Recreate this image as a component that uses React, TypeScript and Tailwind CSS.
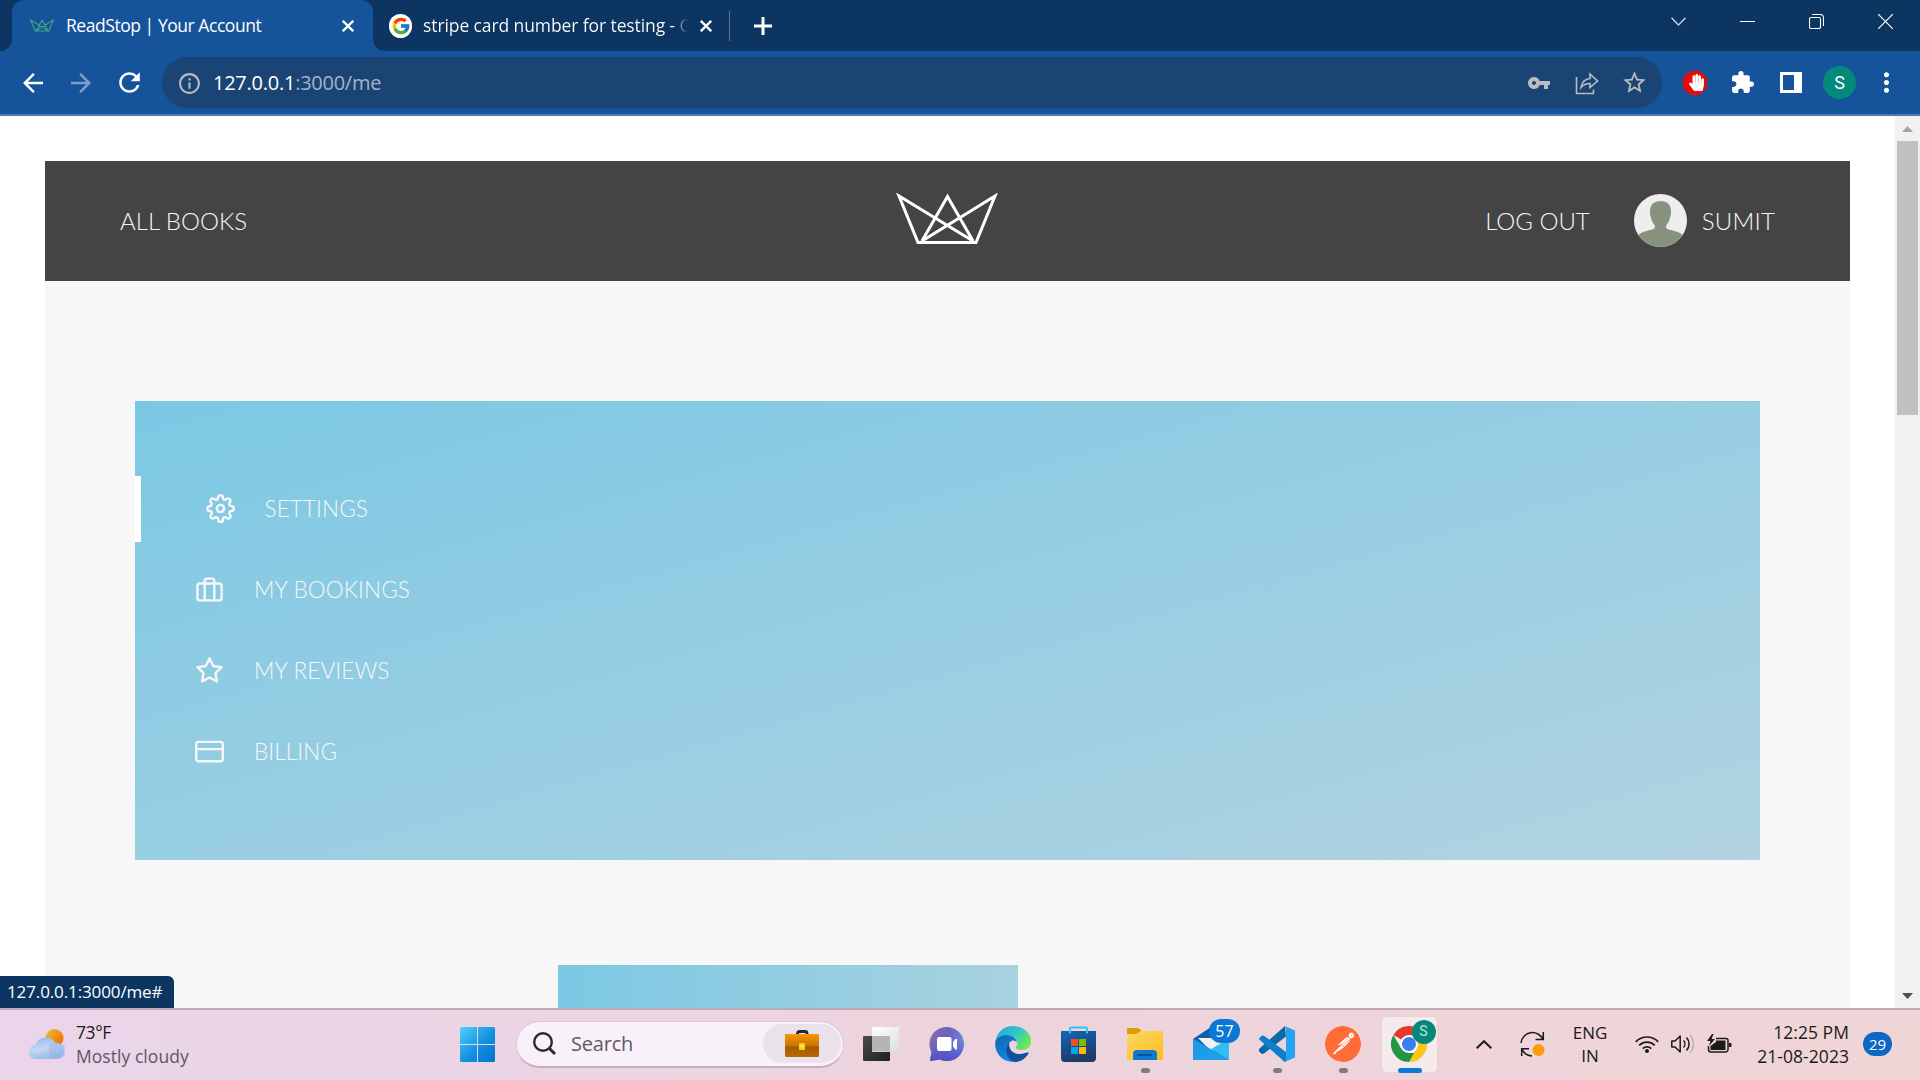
import React from "react";
import {
  MdArrowBack,
  MdArrowForward,
  MdRefresh,
  MdVpnKey,
  MdStarBorder,
  MdExtension,
  MdMoreVert,
  MdInfoOutline,
} from "react-icons/md";
import { FcGoogle } from "react-icons/fc";
import { SiPostman } from "react-icons/si";
import { FaHandPaper } from "react-icons/fa";

function Crown({ className, stroke, width }: { className: string; stroke: string; width: number }) {
  return (
    <svg className={className} viewBox="0 0 102 52" fill="none" stroke={stroke} strokeWidth={width}>
      <path d="M22 49.500H80L99 3L26 48L51.500 3.500L77 48L3 3Z" strokeLinejoin="miter" />
    </svg>
  );
}

function CloseX() {
  return (
    <svg className="size-3 shrink-0" viewBox="0 0 12 12" stroke="#fff" strokeWidth="2.300">
      <path d="M.8 .8L11.200 11.200M11.200 .8L.8 11.200" />
    </svg>
  );
}

function TabStrip() {
  return (
    <div className="flex h-[51px] bg-[#0c3561]">
      <div className="flex w-3 items-end bg-[#15539a]">
        <div className="h-full w-full rounded-br-[12px] bg-[#0c3561]" />
      </div>
      <div className="bg-[#0c3561]">
        <div className="flex h-[51px] w-[361px] items-center rounded-t-[12px] bg-[#15539a] pl-[18px] pr-[19px]">
          <Crown className="h-[13px] w-6" stroke="#3fa584" width={5} />
          <span className="ml-3 grow whitespace-nowrap text-[17.500px] tracking-[-0.45px] text-white">ReadStop | Your Account</span>
          <CloseX />
        </div>
      </div>
      <div className="bg-[#15539a]">
        <div className="flex h-[51px] w-[357px] items-center rounded-bl-[12px] bg-[#0c3561] pl-4">
          <span className="flex size-6 items-center justify-center rounded-full bg-white">
            <FcGoogle size={20} />
          </span>
          <span className="ml-[11px] w-[265px] whitespace-nowrap bg-gradient-to-r from-white from-94% to-transparent bg-clip-text text-[17.500px] tracking-[-0.1px] text-transparent">
            stripe card number for testing - G
          </span>
          <span className="ml-3">
            <CloseX />
          </span>
          <span className="ml-[17px] h-[30px] w-px bg-[#5c7795]" />
        </div>
      </div>
      <div className="flex grow items-center bg-[#0c3561] pl-[24px]">
        <svg className="size-[18px]" viewBox="0 0 18 18" stroke="#fff" strokeWidth="3">
          <path d="M9 0V18M0 9H18" />
        </svg>
      </div>
      <div className="flex h-[43px] items-center gap-[54px] pr-[27px]">
        <svg className="h-[9px] w-[15px]" viewBox="0 0 15 9" fill="none" stroke="#c9d3de" strokeWidth="1.400">
          <path d="M.5 .8L7.500 8L14.500 .8" />
        </svg>
        <svg className="h-[15px] w-[15px]" viewBox="0 0 15 15" stroke="#fff" strokeWidth="1">
          <path d="M0 7.500H15" />
        </svg>
        <svg className="size-[15px]" viewBox="0 0 15 15" fill="none" stroke="#fff" strokeWidth="1.100">
          <rect x=".5" y="3.500" width="11" height="11" rx="1.600" />
          <path d="M3.200 .5H11.500A3 3 0 0 1 14.500 3.500V12" />
        </svg>
        <svg className="size-[15px]" viewBox="0 0 15 15" stroke="#fff" strokeWidth="1.200">
          <path d="M0 0L15 15M15 0L0 15" />
        </svg>
      </div>
    </div>
  );
}

function Toolbar() {
  return (
    <div className="flex h-[65px] items-center border-b-2 border-[#4a7ab4] bg-[#15539a] pl-[18px] text-white">
      <MdArrowBack size={30} />
      <MdArrowForward size={30} className="ml-[18px] text-[#7e9fc8]" />
      <MdRefresh size={31} className="ml-[18px]" />
      <div className="ml-[17px] flex h-[51px] w-[1500px] items-center rounded-full bg-[#1a4474] pl-[14px] text-[#b9bdc2]">
        <MdInfoOutline size={25} className="relative left-px top-px" />
        <span className="ml-3 grow text-[20px] tracking-[-0.25px] text-[#a3b4c7]">
          <span className="text-white">127.0.0.1</span>:3000/me
        </span>
        <MdVpnKey size={24} />
        <svg className="ml-[24px] size-6" viewBox="0 0 24 24" fill="none" stroke="currentColor" strokeWidth="1.600">
          <path d="M1.500 6V22.500H18.500V18.500" />
          <path d="M6 16.500C7 10.500 10 8 15 7.500V3L22.500 10L15 16.500V12.500C11 12.500 8.500 13.500 6 16.500Z" />
        </svg>
        <MdStarBorder size={27} className="ml-[22px] mr-[14px]" />
      </div>
      <svg className="ml-[21px] size-6" viewBox="0 0 24 24">
        <path d="M7 0H17L24 7V17L17 24H7L0 17V7Z" fill="#e60b0b" />
        <foreignObject x="4.500" y="3" width="16" height="18">
          <FaHandPaper size={17} color="#fff" />
        </foreignObject>
      </svg>
      <MdExtension size={25} className="ml-[23px]" />
      <span className="ml-[25px] h-[21px] w-[22px] border-y-[3px] border-l-[3px] border-r-8 border-white" />
      <span className="ml-[21px] flex size-[33px] items-center justify-center rounded-full bg-[#05897a] font-['Roboto'] text-[18px]">
        S
      </span>
      <MdMoreVert size={31} className="ml-[15px]" />
    </div>
  );
}

function Avatar() {
  return (
    <svg className="h-[53px] w-[53px]" viewBox="0 0 53 53">
      <defs>
        <clipPath id="disc">
          <circle cx="26.500" cy="26.500" r="26.500" />
        </clipPath>
      </defs>
      <g clipPath="url(#disc)">
        <rect width="53" height="53" fill="#eeeeee" />
        <path
          d="M26.500 7C33 7 37 10.500 37 17C37 24 34.500 28.500 32.500 31C31.500 33.500 32 34.500 34.500 35.500C41 37 46 38 49 41.500V53H4V41.500C7 38 12 37 18.500 35.500C21 34.500 21.500 33.500 20.500 31C18.500 28.500 16 24 16 17C16 10.500 20 7 26.500 7Z"
          fill="#87927f"
        />
      </g>
    </svg>
  );
}

function MenuIcon({ children }: { children: React.ReactNode }) {
  return (
    <svg
      className="mb-px size-[29px]"
      viewBox="0 0 24 24"
      fill="none"
      stroke="#f7f7f7"
      strokeWidth="2"
      strokeLinecap="round"
      strokeLinejoin="round"
    >
      {children}
    </svg>
  );
}

const menu = [
  {
    label: "SETTINGS",
    active: true,
    icon: (
      <>
        <circle cx="12" cy="12" r="3" />
        <path d="M19.400 15a1.650 1.650 0 0 0 .33 1.820l.06.06a2 2 0 0 1 0 2.830 2 2 0 0 1-2.830 0l-.06-.06a1.650 1.650 0 0 0-1.820-.33 1.650 1.650 0 0 0-1 1.510V21a2 2 0 0 1-2 2 2 2 0 0 1-2-2v-.09A1.650 1.650 0 0 0 9 19.400a1.650 1.650 0 0 0-1.820.33l-.06.06a2 2 0 0 1-2.830 0 2 2 0 0 1 0-2.830l.06-.06a1.650 1.650 0 0 0 .33-1.820 1.650 1.650 0 0 0-1.510-1H3a2 2 0 0 1-2-2 2 2 0 0 1 2-2h.09A1.650 1.650 0 0 0 4.600 9a1.650 1.650 0 0 0-.33-1.820l-.06-.06a2 2 0 0 1 0-2.830 2 2 0 0 1 2.830 0l.06.06a1.650 1.650 0 0 0 1.820.33H9a1.650 1.650 0 0 0 1-1.510V3a2 2 0 0 1 2-2 2 2 0 0 1 2 2v.09a1.650 1.650 0 0 0 1 1.510 1.650 1.650 0 0 0 1.820-.33l.06-.06a2 2 0 0 1 2.830 0 2 2 0 0 1 0 2.830l-.06.06a1.650 1.650 0 0 0-.33 1.820V9a1.650 1.650 0 0 0 1.510 1H21a2 2 0 0 1 2 2 2 2 0 0 1-2 2h-.09a1.650 1.650 0 0 0-1.510 1z" />
      </>
    ),
  },
  {
    label: "MY BOOKINGS",
    active: false,
    icon: (
      <>
        <rect x="2" y="7" width="20" height="14" rx="2" />
        <path d="M16 21V5a2 2 0 0 0-2-2h-4a2 2 0 0 0-2 2v16" />
      </>
    ),
  },
  {
    label: "MY REVIEWS",
    active: false,
    icon: <path d="M12 2l3.090 6.260L22 9.270l-5 4.870 1.180 6.880L12 17.770l-6.180 3.250L7 14.140 2 9.270l6.910-1.010L12 2z" />,
  },
  {
    label: "BILLING",
    active: false,
    icon: (
      <>
        <rect x="1" y="4" width="22" height="16" rx="2" />
        <path d="M1 10h22" />
      </>
    ),
  },
];

function Page() {
  return (
    <div className="flex h-[892px] overflow-hidden bg-white font-['Lato']">
      <div className="grow px-[45px] pt-[45px]">
        <div className="h-[847px] bg-[#f7f7f7]">
          <header className="flex h-[120px] items-center bg-[#444444] px-[75px] text-[24px] font-light text-[#f7f7f7]">
            <span className="flex-1">ALL BOOKS</span>
            <Crown className="mb-1 mr-px h-[52px] w-[102px]" stroke="#fff" width={3} />
            <div className="flex flex-1 items-center justify-end">
              <span className="mr-[44px]">LOG OUT</span>
              <div className="mb-px">
                <Avatar />
              </div>
              <span className="ml-[15px] tracking-[0.2px]">SUMIT</span>
            </div>
          </header>
          <div className="px-[90px] pt-[120px]">
            <nav className="flex h-[459px] flex-col gap-[15px] bg-gradient-to-br from-[#7bc8e4] to-[#b2d3e0] py-[75px] text-[22.500px] font-light tracking-[0.12px] text-[#f7f7f7]">
              {menu.map((m) => (
                <div
                  key={m.label}
                  className={
                    m.active
                      ? "flex h-[66px] items-center border-l-[6px] border-white pl-[64.500px]"
                      : "flex h-[66px] items-center pl-[60px]"
                  }
                >
                  <MenuIcon>{m.icon}</MenuIcon>
                  <span className="ml-[30px]">{m.label}</span>
                </div>
              ))}
            </nav>
            <div className="ml-[423px] mt-[105px] h-[43px] w-[460px] bg-gradient-to-r from-[#7bc8e4] to-[#a8d2df]" />
          </div>
        </div>
      </div>
      <div className="flex w-[25px] flex-col items-center bg-[#f1f1f1]">
        <svg className="mt-[10px] h-[6px] w-[11px] shrink-0" viewBox="0 0 11 6">
          <path d="M0 6L5.500 0L11 6Z" fill="#a3a3a3" />
        </svg>
        <div className="mt-[9px] h-[274px] w-[21px] bg-[#c1c1c1]" />
        <svg className="mb-[9px] mt-auto h-[6px] w-[11px]" viewBox="0 0 11 6">
          <path d="M0 0L5.500 6L11 0Z" fill="#505050" />
        </svg>
      </div>
    </div>
  );
}

function TaskButton({ children, running }: { children: React.ReactNode; running?: boolean }) {
  return (
    <div className="relative flex h-full w-[66px] items-center justify-center">
      {children}
      {running && <span className="absolute bottom-[5px] left-[29px] h-[5px] w-[9px] rounded-full bg-[#857a7d]" />}
    </div>
  );
}

function WeatherIcon() {
  return (
    <svg className="h-[31px] w-9" viewBox="0 0 36 31">
      <defs>
        <linearGradient id="sun" x1="0" y1="0" x2="1" y2="1">
          <stop offset="0" stopColor="#e9c32e" />
          <stop offset=".8" stopColor="#f2740f" />
        </linearGradient>
        <linearGradient id="cloud" x1="0" y1="0" x2=".3" y2="1">
          <stop offset="0" stopColor="#92b4f0" />
          <stop offset=".6" stopColor="#c3d8f2" />
          <stop offset="1" stopColor="#9bbcee" />
        </linearGradient>
      </defs>
      <circle cx="25.500" cy="9" r="9" fill="url(#sun)" />
      <path d="M7 30A7 7 0 0 1 6.500 16A11 11 0 0 1 26.500 14A8 8 0 0 1 28 30Z" fill="url(#cloud)" />
      <path d="M19 19C21 15 24 13.500 28 13.500A8 8 0 0 1 29 30H22Z" fill="#8fb1e8" opacity=".45" />
    </svg>
  );
}

function StartIcon() {
  return (
    <svg className="size-[35px]" viewBox="0 0 35 35">
      <defs>
        <linearGradient id="win" gradientUnits="userSpaceOnUse" x1="0" y1="0" x2="35" y2="35">
          <stop offset="0" stopColor="#4fd2ff" />
          <stop offset=".55" stopColor="#1490df" />
          <stop offset="1" stopColor="#0072d2" />
        </linearGradient>
      </defs>
      <path
        d="M1.500 0H17V17H0V1.500A1.500 1.500 0 0 1 1.500 0ZM18 0H33.500A1.500 1.500 0 0 1 35 1.500V17H18ZM0 18H17V35H1.500A1.500 1.500 0 0 1 0 33.500ZM18 18H35V33.500A1.500 1.500 0 0 1 33.500 35H18Z"
        fill="url(#win)"
      />
    </svg>
  );
}

function BriefcaseIcon() {
  return (
    <svg className="h-[27px] w-[34px]" viewBox="0 0 34 27">
      <defs>
        <linearGradient id="caseTop" x1="0" y1="0" x2="0" y2="1">
          <stop offset="0" stopColor="#f79a05" />
          <stop offset="1" stopColor="#c56f02" />
        </linearGradient>
        <linearGradient id="caseLow" x1="0" y1="0" x2="0" y2="1">
          <stop offset="0" stopColor="#8a4400" />
          <stop offset="1" stopColor="#b96a05" />
        </linearGradient>
      </defs>
      <path d="M12.500 5V3.500A2 2 0 0 1 14.500 1.500H20A2 2 0 0 1 22 3.500V5" fill="none" stroke="#26282c" strokeWidth="2.800" />
      <rect x="0" y="4" width="34" height="23" rx="1.500" fill="url(#caseLow)" />
      <path d="M1.500 4H32.500A1.500 1.500 0 0 1 34 5.500V16.500H0V5.500A1.500 1.500 0 0 1 1.500 4Z" fill="url(#caseTop)" />
      <rect x="14" y="13" width="6" height="7" fill="#f7cf14" />
      <rect x="15.500" y="15" width="3" height="2.500" fill="#fff06a" />
    </svg>
  );
}

function TaskViewIcon() {
  return (
    <svg className="size-9" viewBox="0 0 36 36">
      <defs>
        <linearGradient id="tv1" x1="0" y1="0" x2="1" y2="1">
          <stop offset="0" stopColor="#4a4a48" />
          <stop offset="1" stopColor="#1f1f1e" />
        </linearGradient>
        <linearGradient id="tv2" x1="0" y1="0" x2="1" y2="1">
          <stop offset="0" stopColor="#ffffff" />
          <stop offset="1" stopColor="#dddddd" />
        </linearGradient>
      </defs>
      <rect x="0" y="10" width="27" height="25" rx="1" fill="url(#tv1)" />
      <rect x="9" y="1" width="27" height="25" rx="1" fill="url(#tv2)" />
      <rect x="9" y="10" width="18" height="15.500" fill="#b5b5b5" />
    </svg>
  );
}

function ChatIcon() {
  return (
    <svg className="size-9" viewBox="0 0 36 36">
      <defs>
        <linearGradient id="chat" x1="0" y1=".3" x2="1" y2=".5">
          <stop offset="0" stopColor="#8a68b0" />
          <stop offset=".5" stopColor="#6a62bd" />
          <stop offset="1" stopColor="#6d87e4" />
        </linearGradient>
        <linearGradient id="chatLow" x1="0" y1="0" x2="0" y2="1">
          <stop offset=".4" stopColor="#5059c9" stopOpacity="0" />
          <stop offset="1" stopColor="#5350c4" />
        </linearGradient>
      </defs>
      <path d="M18 1A17 17 0 1 1 11 33.500L1 35L2.500 26A17 17 0 0 1 18 1Z" fill="url(#chat)" />
      <path d="M18 1A17 17 0 1 1 11 33.500L1 35L2.500 26A17 17 0 0 1 18 1Z" fill="url(#chatLow)" />
      <rect x="8" y="11" width="14.500" height="14" rx="2" fill="#fff" />
      <path d="M24 16L26.500 13H28V23.500H26.500L24 20.500Z" fill="#fff" />
    </svg>
  );
}

function EdgeIcon() {
  return (
    <svg className="size-9" viewBox="0 0 36 36">
      <defs>
        <linearGradient id="edgeA" x1="0" y1="0" x2="1" y2=".6">
          <stop offset="0" stopColor="#1fa4e4" />
          <stop offset=".55" stopColor="#30c6c6" />
          <stop offset="1" stopColor="#6cea4e" />
        </linearGradient>
        <linearGradient id="edgeB" x1="0" y1="0" x2=".6" y2="1">
          <stop offset="0" stopColor="#0f62b4" />
          <stop offset="1" stopColor="#128be2" />
        </linearGradient>
      </defs>
      <path d="M.5 15C2 6 9 0 18 0C28.500 0 36 7 36 15.500C36 21 32 24 27 24C23 24 21 23 21 21.500C21 20.500 22.500 19.500 22.500 17C22.500 12 17 9 11.500 9C6 9 2 11.500 .5 15Z" fill="url(#edgeA)" />
      <path d="M.5 15C2 11.500 6 9 11.500 9C17 9 22 12 22 17C21 14 17 13.500 15 16C9 22 12 32 20 35.900C9 37 0 28.500 .2 18Z" fill="url(#edgeB)" />
      <path d="M15 15.500C13 17 13.500 28 25 28C29 28 31 26 33 26.500C34 27 33.500 28 32.500 29C29.500 33.500 25 36 20 36C11 33.500 8 22 15 15.500Z" fill="#10509c" />
    </svg>
  );
}

function StoreIcon() {
  return (
    <svg className="size-9" viewBox="0 0 36 36">
      <defs>
        <linearGradient id="store" x1="0" y1="0" x2=".3" y2="1">
          <stop offset="0" stopColor="#0f68b8" />
          <stop offset="1" stopColor="#203a66" />
        </linearGradient>
      </defs>
      <path d="M0 5H35V32A4 4 0 0 1 31 36H4A4 4 0 0 1 0 32Z" fill="url(#store)" />
      <path d="M9 7.500V2.500A1 1 0 0 1 10 1.500H25A1 1 0 0 1 26 2.500V7.500" fill="none" stroke="#35c1f1" strokeWidth="2" />
      <rect x="10" y="13" width="7" height="7" fill="#f25022" />
      <rect x="18" y="13" width="7" height="7" fill="#7fba00" />
      <rect x="10" y="21" width="7" height="7" fill="#00a4ef" />
      <rect x="18" y="21" width="7" height="7" fill="#ffb900" />
    </svg>
  );
}

function ExplorerIcon() {
  return (
    <svg className="size-9" viewBox="0 0 36 36">
      <defs>
        <linearGradient id="folder" x1="0" y1="0" x2="1" y2="1">
          <stop offset="0" stopColor="#ffd863" />
          <stop offset="1" stopColor="#fcbd20" />
        </linearGradient>
      </defs>
      <path d="M0 3A1 1 0 0 1 1 2H11L15 5V9H0Z" fill="#dd9b05" />
      <path d="M0 8H9L14 5H35A1 1 0 0 1 36 6V34H0Z" fill="url(#folder)" />
      <path d="M6 34V28A4 4 0 0 1 10 24H26A4 4 0 0 1 30 28V34Z" fill="#0f78d0" />
      <path d="M10.500 29H25" stroke="#0b4f8f" strokeWidth="1.800" />
    </svg>
  );
}

function MailIcon() {
  return (
    <div className="relative">
      <svg className="size-9" viewBox="0 0 36 36">
        <path d="M0 13L18 1L36 13V34H0Z" fill="#0d5ea8" />
        <path d="M5 12H31V22L18 25Z" fill="#f1f1f2" />
        <path d="M0 12.500L36 34H0Z" fill="#1c9be6" />
        <path d="M36 12.500L18 23L36 34Z" fill="#36bdf0" />
        <path d="M0 34L18 23.500L36 34Z" fill="#1f9fe6" />
      </svg>
      <span className="absolute -top-[7px] left-4 flex h-6 w-[31px] items-center justify-center rounded-full bg-[#0a78d4] text-[16px] text-white">
        57
      </span>
    </div>
  );
}

function VsCodeIcon() {
  return (
    <svg className="size-9" viewBox="0 0 36 36">
      <path d="M26 0L0 23V25.500L3 28L5 27.500L27 10.500Z" fill="#0b68ac" />
      <path d="M0 12.500L3 9.500L5 9.700L27 26V36L25.500 35.700L.3 13.500Z" fill="#0c80cc" />
      <path d="M25.500 0L36 4.500V31.500L25.500 36L24.500 35.500C26 36 27 34 27 33V3C27 1.500 26 .5 25.500 0Z" fill="#27a2f2" />
    </svg>
  );
}

function ChromeIcon() {
  return (
    <svg className="size-9" viewBox="0 0 36 36">
      <path d="M18 18L2.400 9A18 18 0 0 1 33.600 9Z" fill="#e2392c" />
      <path d="M18 9H33.600A18 18 0 0 1 18 36L25.800 22.500Z" fill="#fcc518" />
      <path d="M2.400 9L10.200 22.500L18 27H23.200L18 36A18 18 0 0 1 2.400 9Z" fill="#249542" />
      <circle cx="18" cy="18" r="9" fill="#fff" />
      <circle cx="18" cy="18" r="7" fill="#3b7df0" />
    </svg>
  );
}

function Taskbar() {
  return (
    <footer className="flex h-[72px] items-center border-t-2 border-[#bfabb4] bg-gradient-to-r from-[#ead5eb] via-[#edd3dd] via-50% to-[#f0d5d6] pb-[2px] text-[#1b1b1b]">
      <div className="flex w-[460px] items-center pl-[29px]">
        <WeatherIcon />
        <div className="ml-[11px] text-[17.500px] leading-6 tracking-[0.05px]">
          <div className="tracking-[-0.4px]">73°F</div>
          <div className="text-[#5f5661]">Mostly cloudy</div>
        </div>
      </div>
      <StartIcon />
      <div className="ml-[21px] flex h-[47px] w-[328px] items-center rounded-full border border-b-2 border-[#dfc6dc] border-b-[#c5adc2] bg-[#f9f1f9] pl-4 pr-[2px]">
        <svg className="size-[23px]" viewBox="0 0 23 23" fill="none" stroke="#2b2b2b" strokeWidth="2.400">
          <circle cx="10" cy="10" r="8.800" />
          <path d="M16 16L22 22" strokeWidth="3" />
        </svg>
        <span className="ml-[15px] grow text-[20px] tracking-[-0.2px] text-[#5f5a61]">Search</span>
        <span className="flex h-[39px] w-[78px] items-center justify-center rounded-full bg-[#e9e2ea]">
          <BriefcaseIcon />
        </span>
      </div>
      <div className="ml-1 flex h-full items-center">
        <TaskButton><TaskViewIcon /></TaskButton>
        <TaskButton><ChatIcon /></TaskButton>
        <TaskButton><EdgeIcon /></TaskButton>
        <TaskButton><StoreIcon /></TaskButton>
        <TaskButton running><ExplorerIcon /></TaskButton>
        <TaskButton><MailIcon /></TaskButton>
        <TaskButton running><VsCodeIcon /></TaskButton>
        <TaskButton running>
          <span className="rounded-full bg-white">
            <SiPostman size={36} color="#ff6c37" />
          </span>
        </TaskButton>
        <TaskButton>
          <div className="relative flex h-[57px] w-[57px] items-center justify-center rounded-md border border-[#e6d3d6] bg-[#f6ebec]">
            <ChromeIcon />
            <span className="absolute right-[1px] top-[3px] flex size-6 items-center justify-center rounded-full bg-[#07877a] font-['Roboto'] text-[14px] text-[#bfe3dd]">
              S
            </span>
            <span className="absolute -bottom-px left-4 h-[5px] w-6 rounded-full bg-[#0a78d4]" />
          </div>
        </TaskButton>
      </div>
      <div className="ml-auto flex h-full items-center">
        <svg className="h-[9px] w-4" viewBox="0 0 16 9" fill="none" stroke="#1b1b1b" strokeWidth="2">
          <path d="M.7 8.300L8 1.200L15.300 8.300" />
        </svg>
        <svg className="ml-7 h-[26px] w-[25px]" viewBox="0 0 25 26" fill="none" stroke="#1b1b1b" strokeWidth="1.500">
          <path d="M1 12A11.500 11.500 0 0 1 23 8.500M23.300 1V8.500H15.500M12 25A11.500 11.500 0 0 1 2 18M9 17.800H1.700V25" />
          <circle cx="18.500" cy="19" r="6" fill="#fd9a0a" stroke="none" />
        </svg>
        <div className="ml-6 w-[42px] text-center text-[17px] leading-[23px] tracking-[-0.1px]">
          <div>ENG</div>
          <div>IN</div>
        </div>
        <svg className="ml-6 h-[18px] w-6" viewBox="0 0 24 18" fill="none" stroke="#1b1b1b" strokeWidth="1.700">
          <path d="M.8 6.800A15.500 15.500 0 0 1 23.200 6.800M4.200 10.400A11 11 0 0 1 19.800 10.400M7.700 13.700A6.200 6.200 0 0 1 16.300 13.700" />
          <circle cx="12" cy="16" r="2" fill="#1b1b1b" stroke="none" />
        </svg>
        <svg className="ml-3 h-5 w-6" viewBox="0 0 24 20" fill="none" stroke="#1b1b1b" strokeWidth="1.500">
          <path d="M.8 7H4L9.200 2V18L4 13H.8Z" strokeLinejoin="round" />
          <path d="M12.500 6.500A5 5 0 0 1 12.500 13.500M15.500 3.500A9.500 9.500 0 0 1 15.500 16.500" />
          <path d="M18.800 1A13 13 0 0 1 18.800 19" stroke="#c4adb0" />
        </svg>
        <svg className="ml-3 h-5 w-[25px]" viewBox="0 0 25 20" fill="#1b1b1b">
          <path d="M9 4.500H19A2 2 0 0 1 21 6.500V15.500A2.500 2.500 0 0 1 18.500 18H4A2.500 2.500 0 0 1 1.500 15.500V12" fill="none" stroke="#1b1b1b" strokeWidth="1.500" />
          <path d="M9 6.500H18.500V16H3.500V12L9 8ZM22 9H23.500A1 1 0 0 1 24.500 10V12A1 1 0 0 1 23.500 13H22ZM5 0L0 7H3.500L2 12L8 5H4.500L6.500 0Z" />
        </svg>
        <div className="ml-[9px] w-[108px] whitespace-nowrap text-right text-[17.500px] leading-6 tracking-[0.05px]">
          <div>12:25 PM</div>
          <div>21-08-2023</div>
        </div>
        <span className="ml-[14px] mr-7 flex h-6 w-[29px] items-center justify-center rounded-full bg-[#0b68c4] text-[15px] text-white">
          29
        </span>
      </div>
    </footer>
  );
}

export default function App() {
  return (
    <div className="relative h-[1080px] w-[1920px] overflow-hidden font-['Open_Sans','Noto_Sans',sans-serif]">
      <TabStrip />
      <Toolbar />
      <Page />
      <Taskbar />
      <div className="absolute bottom-[72px] left-0 flex h-8 w-[174px] items-center rounded-tr-md bg-[#0c3561] pl-[7px] text-[17px] tracking-[-0.12px] text-white">
        127.0.0.1:3000/me#
      </div>
    </div>
  );
}
